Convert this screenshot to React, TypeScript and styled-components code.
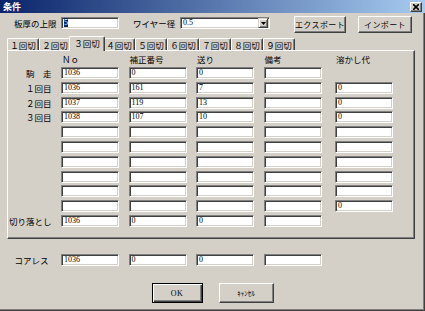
import React from "react";
import styled, { createGlobalStyle, css } from "styled-components";

type Row = {
  label: string;
  no: string;
  hosei: string;
  okuri: string;
  tokashi?: string;
};

const rows: Row[] = [
  { label: "駒　走", no: "1036", hosei: "0", okuri: "0" },
  { label: "１回目", no: "1036", hosei: "161", okuri: "7", tokashi: "0" },
  { label: "２回目", no: "1037", hosei: "119", okuri: "13", tokashi: "0" },
  { label: "３回目", no: "1038", hosei: "107", okuri: "10", tokashi: "0" },
  { label: "", no: "", hosei: "", okuri: "", tokashi: "" },
  { label: "", no: "", hosei: "", okuri: "", tokashi: "" },
  { label: "", no: "", hosei: "", okuri: "", tokashi: "" },
  { label: "", no: "", hosei: "", okuri: "", tokashi: "" },
  { label: "", no: "", hosei: "", okuri: "", tokashi: "" },
  { label: "", no: "", hosei: "", okuri: "", tokashi: "0" },
  { label: "切り落とし", no: "1036", hosei: "0", okuri: "0" },
];

const tabs = ["１回切", "２回切", "３回切", "４回切", "５回切", "６回切", "７回切", "８回切", "９回切"];

const App: React.FC = () => (
  <>
    <GlobalStyle />
    <Window>
      <TitleBar>
        <TitleText>条件</TitleText>
        <CloseButton>
          <svg width="6" height="6" viewBox="0 0 6 6">
            <path d="M0 0 L6 6 M6 0 L0 6" stroke="#000" strokeWidth="1.6" />
          </svg>
        </CloseButton>
      </TitleBar>

      <TopRow>
        <TopLabel $w={47}>板厚の上限</TopLabel>
        <Field $w={58}>
          <Selected>5</Selected>
        </Field>
        <TopLabel $w={47} style={{ marginLeft: 14 }}>
          ワイヤー径
        </TopLabel>
        <Select>
          <span>0.5</span>
          <ArrowButton>
            <svg width="5" height="3" viewBox="0 0 5 3">
              <path d="M0 0 H5 L2.5 3 Z" fill="#000" />
            </svg>
          </ArrowButton>
        </Select>
        <Button $w={52} $h={17} style={{ marginLeft: 24 }}>
          エクスポート
        </Button>
        <Button $w={54} $h={17} style={{ marginLeft: 12 }}>
          インポート
        </Button>
      </TopRow>

      <TabStrip>
        {tabs.map((t, i) => (
          <Tab key={t} $active={i === 2}>
            {t}
          </Tab>
        ))}
      </TabStrip>

      <Panel>
        <Grid>
          <span />
          <Header>Ｎｏ</Header>
          <Header>補正番号</Header>
          <Header>送り</Header>
          <Header>備考</Header>
          <Header $last>溶かし代</Header>
          {rows.map((r, i) => (
            <React.Fragment key={i}>
              <RowLabel>{r.label}</RowLabel>
              <Field $w={58}>{r.no}</Field>
              <Field $w={58}>{r.hosei}</Field>
              <Field $w={58}>{r.okuri}</Field>
              <Field $w={58} />
              {r.tokashi !== undefined ? (
                <Field $w={58} $end>
                  {r.tokashi}
                </Field>
              ) : (
                <span />
              )}
            </React.Fragment>
          ))}
        </Grid>
      </Panel>

      <CoreRow>
        <RowLabel $pad={3}>コアレス</RowLabel>
        <Field $w={58}>1036</Field>
        <Field $w={58}>0</Field>
        <Field $w={58}>0</Field>
        <Field $w={58} />
      </CoreRow>

      <ButtonRow>
        <Button $w={51} $h={20} $default>
          <Latin>OK</Latin>
        </Button>
        <Button $w={55} $h={20}>
          <Small>ｷｬﾝｾﾙ</Small>
        </Button>
      </ButtonRow>
    </Window>
  </>
);

export default App;

const GlobalStyle = createGlobalStyle`
  html, body {
    margin: 0;
    padding: 0;
    background: #d4d0c8;
  }
  body {
    font-family: "Noto Sans CJK JP", "Noto Sans", sans-serif;
    color: #000;
  }
`;

const Window = styled.div`
  width: 425px;
  height: 311px;
  box-sizing: border-box;
  background: #d4d0c8;
  display: flex;
  flex-direction: column;
  overflow: hidden;
  box-shadow: inset -1px -1px #404040, inset -2px -2px #808080;
`;

const TitleBar = styled.div`
  height: 13px;
  flex: none;
  display: flex;
  align-items: center;
  justify-content: space-between;
  padding: 0 3px;
  background: linear-gradient(to right, #0a246a, #a6caf0);
`;

const TitleText = styled.span`
  color: #fff;
  font-weight: 700;
  font-size: 9px;
  line-height: 13px;
`;

const CloseButton = styled.div`
  width: 12px;
  height: 10px;
  box-sizing: border-box;
  display: flex;
  align-items: center;
  justify-content: center;
  background: #d4d0c8;
  border: 1px solid;
  border-color: #fff #404040 #404040 #fff;
  box-shadow: inset -1px -1px #808080;
`;

const TopRow = styled.div`
  display: flex;
  align-items: flex-start;
  height: 17px;
  margin-top: 3px;
  padding-left: 14px;
`;

const TopLabel = styled.span<{ $w: number }>`
  width: ${(p) => p.$w}px;
  flex: none;
  margin-top: 1px;
  font-size: 8.5px;
  line-height: 12px;
  white-space: nowrap;
`;

const Field = styled.div<{ $w: number; $end?: boolean }>`
  box-sizing: border-box;
  width: ${(p) => p.$w}px;
  height: 12px;
  flex: none;
  margin-top: 1px;
  background: #fff;
  border: 1px solid;
  border-color: #808080 #fff #fff #808080;
  box-shadow: inset 1px 1px #404040, inset -1px -1px #d4d0c8;
  padding-left: 2px;
  font-family: "Liberation Serif", serif;
  font-size: 8px;
  line-height: 10px;
  white-space: nowrap;
  overflow: hidden;
  ${(p) =>
    p.$end &&
    css`
      justify-self: end;
    `}
`;

const Selected = styled.span`
  background: #0a246a;
  color: #fff;
`;

const Select = styled(Field).attrs({ $w: 90 })`
  display: flex;
  justify-content: space-between;
  align-items: center;
  padding-right: 1px;
`;

const ArrowButton = styled.div`
  width: 10px;
  height: 10px;
  box-sizing: border-box;
  display: flex;
  align-items: center;
  justify-content: center;
  background: #d4d0c8;
  border: 1px solid;
  border-color: #d4d0c8 #404040 #404040 #d4d0c8;
  box-shadow: inset 1px 1px #fff, inset -1px -1px #808080;
`;

const Button = styled.div<{ $w: number; $h: number; $default?: boolean }>`
  box-sizing: border-box;
  width: ${(p) => p.$w}px;
  height: ${(p) => p.$h}px;
  flex: none;
  display: flex;
  align-items: center;
  justify-content: center;
  background: #d4d0c8;
  font-size: 8px;
  letter-spacing: 0.4px;
  white-space: nowrap;
  border: 1px solid;
  border-color: #fff #404040 #404040 #fff;
  box-shadow: inset -1px -1px #808080;
  ${(p) =>
    p.$default &&
    css`
      border-color: #000;
      box-shadow: inset 1px 1px #fff, inset -1px -1px #404040,
        inset -2px -2px #808080;
    `}
`;

const Latin = styled.span`
  font-family: "Liberation Serif", serif;
  font-size: 8px;
`;

const Small = styled.span`
  font-size: 7px;
  letter-spacing: 0;
`;

const TabStrip = styled.div`
  position: relative;
  z-index: 1;
  display: flex;
  align-items: flex-end;
  height: 14px;
  margin-top: 3px;
  padding-left: 7px;
`;

const Tab = styled.div<{ $active?: boolean }>`
  box-sizing: border-box;
  width: 32px;
  height: 12px;
  flex: none;
  display: flex;
  align-items: center;
  justify-content: center;
  background: #d4d0c8;
  border-top: 1px solid #fff;
  border-left: 1px solid #fff;
  border-right: 1px solid #404040;
  border-radius: 2px 2px 0 0;
  box-shadow: inset -1px 0 #808080;
  font-size: 8.5px;
  line-height: 10px;
  white-space: nowrap;
  ${(p) =>
    p.$active &&
    css`
      position: relative;
      z-index: 2;
      width: 36px;
      height: 15px;
      margin: 0 -2px -1px;
      padding-bottom: 2px;
    `}
`;

const Panel = styled.div`
  position: relative;
  width: 408px;
  height: 189px;
  margin-left: 7px;
  box-sizing: border-box;
  border: 1px solid;
  border-color: #fff #404040 #404040 #fff;
  box-shadow: inset -1px -1px #808080;
  padding-top: 3.2px;
`;

const Grid = styled.div`
  display: grid;
  grid-template-columns: 43.5px repeat(4, 58px) 62px;
  grid-template-rows: 10px repeat(11, 12px);
  column-gap: 9.5px;
  row-gap: 2.8px;
  align-items: start;

  & > ${Field} {
    margin-top: 0;
  }
`;

const Header = styled.div<{ $last?: boolean }>`
  padding-left: ${(p) => (p.$last ? 5 : 1)}px;
  font-size: 8.5px;
  line-height: 10px;
  white-space: nowrap;
`;

const RowLabel = styled.div<{ $pad?: number }>`
  text-align: right;
  padding-right: ${(p) => p.$pad ?? 0}px;
  font-size: 8.5px;
  line-height: 12px;
  white-space: nowrap;
`;

const CoreRow = styled.div`
  display: grid;
  grid-template-columns: 43.5px repeat(4, 58px);
  column-gap: 9.5px;
  margin: 15px 0 0 8px;

  & > ${Field} {
    margin-top: 0;
  }
`;

const ButtonRow = styled.div`
  display: flex;
  justify-content: center;
  gap: 16px;
  margin-top: 17px;
`;
